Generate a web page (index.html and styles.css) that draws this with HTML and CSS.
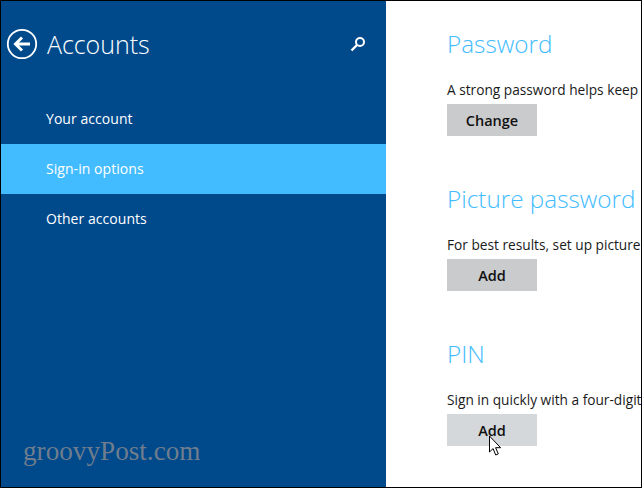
FILE: index.html
```html
<!DOCTYPE html>
<html lang="en">
<head>
  <meta charset="UTF-8" />
  <title>Accounts</title>
  <link rel="stylesheet" href="styles.css">
</head>
<body>
  <div class="frame">
    <aside class="sidebar">
      <div class="header">
        <svg class="back-icon" width="32" height="32" viewBox="0 0 32 32" aria-hidden="true">
          <circle cx="16" cy="16" r="14.2" fill="none" stroke="#fff" stroke-width="1.8"/>
          <path d="M24 16H10M16 9.5L9.5 16l6.5 6.5" fill="none" stroke="#fff" stroke-width="3"/>
        </svg>
        <h1>Accounts</h1>
        <svg class="search-icon" width="16" height="16" viewBox="0 0 16 16" aria-hidden="true">
          <circle cx="10" cy="6" r="4" fill="none" stroke="#fff" stroke-width="2"/>
          <path d="M7 9L1.5 14.5" fill="none" stroke="#fff" stroke-width="2.4"/>
        </svg>
      </div>
      <nav class="menu">
        <a class="menu-item">Your account</a>
        <a class="menu-item active">Sign-in options</a>
        <a class="menu-item">Other accounts</a>
      </nav>
      <div class="watermark">groovyPost.com</div>
    </aside>
    <main class="content">
      <section class="group">
        <h2>Password</h2>
        <p>A strong password helps keep your account safe</p>
        <button class="btn">Change</button>
      </section>
      <section class="group">
        <h2>Picture password</h2>
        <p>For best results, set up picture password on the screen</p>
        <button class="btn">Add</button>
      </section>
      <section class="group">
        <h2>PIN</h2>
        <p>Sign in quickly with a four-digit PIN code</p>
        <div class="btn-wrap">
          <button class="btn hover">Add</button>
          <svg class="cursor" width="14" height="22" viewBox="0 0 14 22" aria-hidden="true">
            <path d="M1.5 1v16l3.6-3.4 2.6 6.4 2.6-1.1-2.7-6.2h5z" fill="#fff" stroke="#000" stroke-width="1"/>
          </svg>
        </div>
      </section>
    </main>
  </div>
</body>
</html>
```

FILE: styles.css
```css
html, body {
  margin: 0;
  height: 100%;
  overflow: hidden;
}

body {
  background-color: #000;
  font-family: 'Open Sans', sans-serif;
}

.frame {
  display: flex;
  height: 486px;
  margin: 1px;
  background-color: #fff;
  overflow: hidden;
}

.sidebar {
  width: 385px;
  flex-shrink: 0;
  background-color: #004a8c;
  color: #fff;
  display: flex;
  flex-direction: column;
}

.header {
  display: flex;
  align-items: center;
  height: 87px;
  padding: 0 0 1px 5px;
  box-sizing: border-box;
}

.back-icon {
  flex-shrink: 0;
}

h1 {
  flex: 1;
  margin: 0 0 0 9px;
  font-size: 25px;
  font-weight: 300;
  letter-spacing: -0.05px;
}

.search-icon {
  margin-right: 20px;
}

.menu {
  margin-top: 6px;
}

.menu-item {
  display: block;
  height: 50px;
  line-height: 50px;
  padding-left: 45px;
  font-size: 14px;
  letter-spacing: 0.05px;
}

.menu-item.active {
  background-color: #43bcff;
}

.watermark {
  margin-top: auto;
  padding: 0 0 20px 22px;
  font-family: 'Liberation Serif', serif;
  font-size: 27.2px;
  color: #6f7d8c;
}

.content {
  flex: 1;
  padding: 23px 0 0 61px;
  min-width: 0;
  overflow: hidden;
}

.group {
  height: 155px;
}

h2 {
  margin: 0;
  font-size: 24.3px;
  line-height: 40px;
  font-weight: 300;
  color: #43bcff;
  white-space: nowrap;
}

p {
  margin: 16px 0 0 0;
  font-size: 13.7px;
  line-height: 20px;
  color: #1a1a1a;
  white-space: nowrap;
}

.btn {
  display: block;
  width: 90px;
  height: 32px;
  margin-top: 4px;
  border: none;
  padding: 0;
  background-color: #cacbcd;
  color: #111;
  font-family: 'Open Sans', sans-serif;
  font-size: 14.5px;
  font-weight: 600;
}

.btn.hover {
  background-color: #d5d8db;
}

.btn-wrap {
  position: relative;
}

.cursor {
  position: absolute;
  left: 41px;
  top: 21px;
}
```
